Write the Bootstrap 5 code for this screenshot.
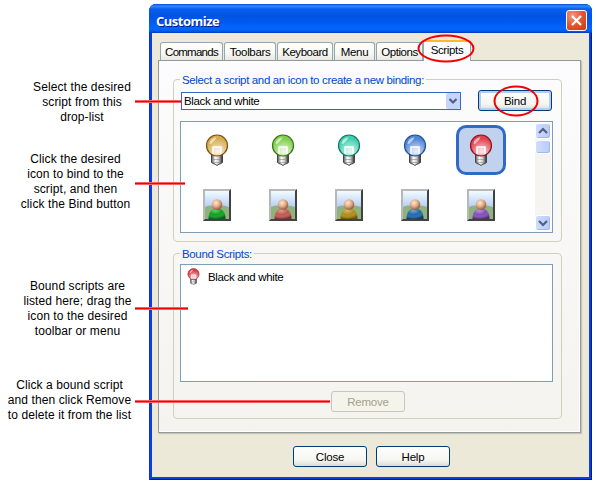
<!DOCTYPE html>
<html lang="en">
<head>
<meta charset="utf-8">
<meta name="viewport" content="width=device-width, initial-scale=1">
<title>Customize</title>
<link href="https://cdn.jsdelivr.net/npm/bootstrap@5.3.0/dist/css/bootstrap.min.css" rel="stylesheet">
<style>
body{width:596px;height:485px;overflow:hidden;background:#fff;color:#000;font:11.5px/15px "Liberation Sans",Arial,sans-serif;letter-spacing:-.35px}
.notes{width:149px;font:12px/15px "Liberation Sans",Arial,sans-serif;letter-spacing:.1px;text-align:center;white-space:nowrap}
.n1{margin-top:80px;padding-left:15px}
.n2{margin-top:27px;padding-left:2px}
.n3{margin-top:67px;padding-left:6px}
.n4{margin-top:39px;padding-right:10px}
.dlg{width:443px;height:476px;margin-top:4px;background:#0a3fe0;border-radius:7px 7px 0 0;padding:0 3px 3px;box-shadow:inset 1px 0 #0831d9,inset -1px -1px #001a9c}
.caption{height:29px;margin:0 -3px;padding:0 5px 0 7px;border-radius:7px 7px 0 0;background:linear-gradient(#0a4bd0 0,#2f8bff 7%,#0b5fee 17%,#0054e3 40%,#0058ee 60%,#0066ff 85%,#005bf0 93%,#0038b8 100%);color:#fff;font:bold 13px/20px "Open Sans","Noto Sans",sans-serif;letter-spacing:-.5px;text-shadow:1px 1px #0a1883}
.face{height:444px;background:#ece9d8;padding:7px 8px 0 6px}
.xbtn{width:21px;height:21px;border:1px solid #fff;border-radius:3px;background:radial-gradient(circle at 30% 25%,#f09a80,#e2552f 50%,#c93a12)}
.tabrow{height:20px;padding-left:2px;gap:1px}
.tabx{height:18px;border:1px solid #91a7b4;border-bottom:0;border-radius:3px 3px 0 0;background:linear-gradient(#fff,#f8f8f4 60%,#e8e7e0);text-align:center;line-height:18px;white-space:nowrap}
.tabx.on{height:21px;margin:0 0 -1px -1px;border-top:2px solid #ffb92e;background:#fcfcfe;position:relative;line-height:16px}
.w1{width:63px;letter-spacing:-.75px}.w2{width:52px}.w3{width:56px;letter-spacing:-.45px}.w4{width:41px}.w5{width:47px;letter-spacing:-.45px}.w6{width:48px}
.pane{height:373px;border:1px solid #919b9c;background:linear-gradient(#fcfcfe,#f4f3ee);padding:11px 18px 0 14px;box-shadow:1px 1px 1px #c8c5b2,inset -1px -1px #fff}
.grp{border:1px solid #d0d0bf;border-radius:4px}
.g1{height:163px;margin-top:7px;padding:0 9px 0 7px}
.g2{height:166px;margin-top:11px;padding:0 9px 0 6px}
.cap{width:max-content;height:14px;margin:-8px 0 0 -1px;padding:0 2px;line-height:16px;color:#0046d5;background:#fafafa}
.g2 .cap{margin-left:0;background:#f7f6f4}
.combo{width:280px;height:18px;border:1px solid #316ac5;background:#fff;padding:0 0 0 2px;line-height:17px}
.arrow{width:14px;height:16px;background:#c5d5fc;border-radius:2px}
.xpbtn{width:74px;height:21px;border:1px solid #003c74;border-radius:3px;background:linear-gradient(#fff,#f5f5f1 70%,#dddcd2);text-align:center;line-height:20px;letter-spacing:-.2px}
.xpbtn.def{box-shadow:inset 0 0 0 2px #b5cdf0}
.xpbtn.off{border-color:#c9c7ba;background:#f5f4ea;color:#a1a192}
.box{border:1px solid #7f9db9;background:#fff;width:373px}
.gallery{width:330px;margin-left:3px;padding-top:3px;display:grid;grid-template-columns:repeat(5,66px);grid-auto-rows:50px;row-gap:5px;justify-items:center}
.gallery>div{width:50px;height:50px;display:flex;align-items:center;justify-content:center}
.gallery>.sel{border:3px solid #316ac5;border-radius:10px;background:#c1d2ee}
.sb{width:16px;background:#f5f4f1;margin:1px 1px 1px auto}
.sbb{height:16px;border:1px solid #fff;border-radius:3px;background:linear-gradient(90deg,#cfdcff,#b8cbfa);box-shadow:inset -1px -1px #a3b8ee}
svg{display:block}
.ink{left:0;top:0;pointer-events:none}
</style>
<script src="https://cdn.jsdelivr.net/npm/bootstrap@5.3.0/dist/js/bootstrap.bundle.min.js"></script>
</head>
<body class="position-relative">
<svg width="0" height="0" class="position-absolute">
<defs>
<linearGradient id="metal"><stop offset="0" stop-color="#555"/><stop offset=".35" stop-color="#fff"/><stop offset=".65" stop-color="#ccc"/><stop offset="1" stop-color="#222"/></linearGradient>
<radialGradient id="glow" cx=".55" cy=".8" r=".65"><stop offset="0" stop-color="#fff" stop-opacity=".8"/><stop offset="1" stop-color="#fff" stop-opacity="0"/></radialGradient>
<radialGradient id="skin" cx=".4" cy=".35" r=".7"><stop offset="0" stop-color="#ffe9cf"/><stop offset=".5" stop-color="#e0ac88"/><stop offset="1" stop-color="#8c4f30"/></radialGradient>
<linearGradient id="sky" x2="0" y2="1"><stop offset="0" stop-color="#f2fbff"/><stop offset=".55" stop-color="#b9cff5"/></linearGradient>
<radialGradient id="shade" cx=".4" cy=".2" r=".8"><stop offset="0" stop-color="#fff" stop-opacity=".4"/><stop offset=".5" stop-color="#fff" stop-opacity="0"/><stop offset="1" stop-color="#000" stop-opacity=".4"/></radialGradient>
<symbol id="bulb" viewBox="0 0 24 32">
<path d="M6.500 20h11v8.500l-2.500 1.500h-1l-2 1.500-2-1.500H9l-2.500-1.500z" fill="url(#metal)" stroke="#444" stroke-width="1"/>
<path d="M8 25.500h8M8 28.500h8" stroke="#888" stroke-width=".6"/>
<circle cx="12" cy="11.500" r="10.500" style="fill:var(--c);stroke:var(--d)" stroke-width="1.200"/>
<circle cx="12" cy="11.500" r="9.800" fill="url(#glow)"/>
<path d="M8 20v-7h8v7" fill="#fff" fill-opacity=".35" stroke="#fff" stroke-width="1.500"/>
<path d="M4.500 9.500C5 6 8 3.500 11.500 3.500L10 6 6 10z" fill="#fff" fill-opacity=".6"/>
</symbol>
<symbol id="person" viewBox="0 0 28 32">
<path d="M0 0h28v32H0z" fill="#424242"/><path d="M0 0h28l-2 2v28H2l-2 2z" fill="#b8b8b8"/>
<path d="M2 2h24v28H2z" fill="url(#sky)"/>
<path d="M2 18q5-3 10 0 7-3 14 0v12H2z" fill="#8fb27f"/>
<path d="M5.500 30c0-7 3-10.500 8.500-10.500s8.500 3.500 8.500 10.500z" style="fill:var(--c)"/>
<path d="M5.500 30c0-7 3-10.500 8.500-10.500s8.500 3.500 8.500 10.500z" fill="url(#shade)"/>
<circle cx="14" cy="15.500" r="5.300" fill="url(#skin)"/>
</symbol>
</defs>
</svg>
<div class="d-flex">
<div class="notes">
<div class="n1">Select the desired<br>script from this<br>drop-list</div>
<div class="n2">Click the desired<br>icon to bind to the<br>script, and then<br>click the Bind button</div>
<div class="n3">Bound scripts are<br>listed here; drag the<br>icon to the desired<br>toolbar or menu</div>
<div class="n4">Click a bound script<br>and then click Remove<br>to delete it from the list</div>
</div>
<div class="dlg">
<div class="caption d-flex align-items-center justify-content-between pt-1"><span>Customize</span>
<span class="xbtn"><svg width="19" height="19"><path d="M5 5l9 9M14 5l-9 9" stroke="#fff" stroke-width="2.200"/></svg></span></div>
<div class="face">
<div class="tabrow d-flex align-items-end">
<div class="tabx w1">Commands</div><div class="tabx w2">Toolbars</div><div class="tabx w3">Keyboard</div><div class="tabx w4">Menu</div><div class="tabx w5">Options</div><div class="tabx on w6">Scripts</div>
</div>
<div class="pane">
<div class="grp g1">
<div class="cap">Select a script and an icon to create a new binding:</div>
<div class="d-flex justify-content-between align-items-center mt-1">
<div class="combo d-flex justify-content-between"><span>Black and white</span><span class="arrow"><svg width="14" height="16"><path d="M3.500 6l3.500 3.500L10.500 6" fill="none" stroke="#4d6185" stroke-width="2.200"/></svg></span></div>
<div class="xpbtn def">Bind</div>
</div>
<div class="box d-flex" style="height:112px;margin:10px 0 0 -1px">
<div class="gallery">
<div><svg width="24" height="32" style="--c:#d5ac4e;--d:#7b5216"><use href="#bulb"/></svg></div>
<div><svg width="24" height="32" style="--c:#80cf4d;--d:#3c7417"><use href="#bulb"/></svg></div>
<div><svg width="24" height="32" style="--c:#40cfae;--d:#127466"><use href="#bulb"/></svg></div>
<div><svg width="24" height="32" style="--c:#5085d8;--d:#24508e"><use href="#bulb"/></svg></div>
<div class="sel"><svg width="24" height="32" style="--c:#e04350;--d:#8d1420"><use href="#bulb"/></svg></div>
<div><svg width="28" height="32" style="--c:#0da01b"><use href="#person"/></svg></div>
<div><svg width="28" height="32" style="--c:#c4574f"><use href="#person"/></svg></div>
<div><svg width="28" height="32" style="--c:#b18b13"><use href="#person"/></svg></div>
<div><svg width="28" height="32" style="--c:#1e68ad"><use href="#person"/></svg></div>
<div><svg width="28" height="32" style="--c:#854cbd"><use href="#person"/></svg></div>
</div>
<div class="sb d-flex flex-column">
<div class="sbb"><svg width="14" height="14"><path d="M3 9l4-4 4 4" fill="none" stroke="#4d6185" stroke-width="2.200"/></svg></div>
<div class="sbb" style="height:14px;margin-top:1px"></div>
<div class="sbb mt-auto"><svg width="14" height="14"><path d="M3 5l4 4 4-4" fill="none" stroke="#4d6185" stroke-width="2.200"/></svg></div>
</div>
</div>
</div>
<div class="grp g2">
<div class="cap">Bound Scripts:</div>
<div class="box d-flex" style="height:118px;margin-top:4px;padding:3px 0 0 6px">
<svg width="13" height="17" style="--c:#dc3945;--d:#9c2a33"><use href="#bulb"/></svg><span style="margin-left:8px;line-height:18px">Black and white</span>
</div>
<div class="xpbtn off" style="margin:9px 0 0 151px">Remove</div>
</div>
</div>
<div class="d-flex" style="gap:9px;margin:13px 0 0 135px"><div class="xpbtn">Close</div><div class="xpbtn">Help</div></div>
</div>
</div>
</div>
<svg class="ink position-absolute" width="596" height="485">
<g stroke="#ff8080" stroke-width="3"><path d="M135 101.500h46M135 183.500h50M135 308.500h53M135 401.500h195"/></g>
<g fill="none" stroke="#f00000" stroke-width="1.500"><path d="M135 101.500h46M135 183.500h50M135 308.500h53M135 401.500h195"/>
<g stroke-width="2"><ellipse cx="446" cy="48.500" rx="27.500" ry="13"/><ellipse cx="516" cy="101" rx="21.500" ry="14.500"/></g></g>
</svg>
</body>
</html>
